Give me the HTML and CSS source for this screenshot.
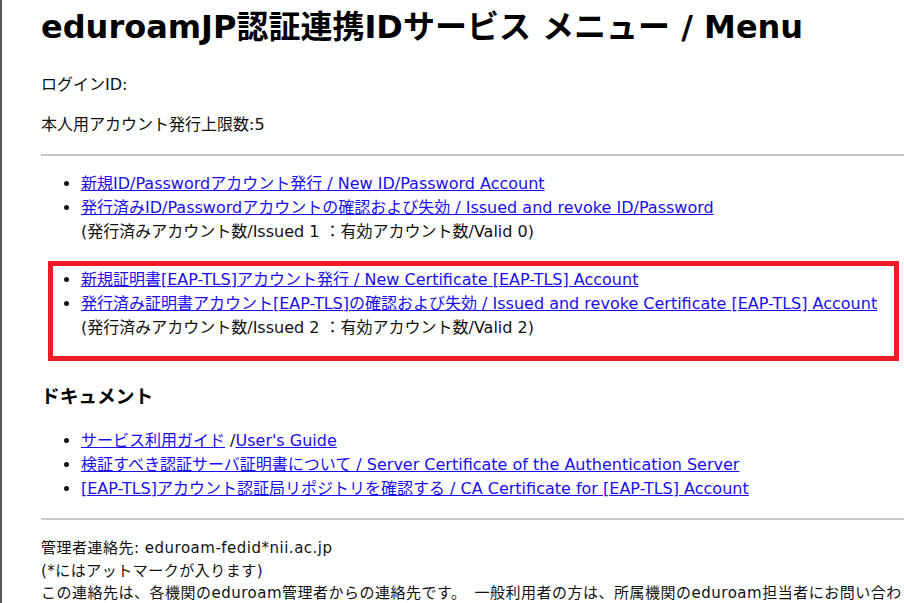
FILE: index.html
```html
<!DOCTYPE html>
<html lang="ja">
<head>
<meta charset="utf-8">
<title>eduroamJP認証連携IDサービス メニュー / Menu</title>
<link rel="stylesheet" href="styles.css">
</head>
<body>
<div class="page">
  <h1 class="title">eduroamJP認証連携IDサービス メニュー / Menu</h1>
  <p class="info">ログインID:</p>
  <p class="info">本人用アカウント発行上限数:5</p>
  <hr class="rule rule-top">
  <ul class="menu menu-first">
    <li><a href="#">新規ID/Passwordアカウント発行 / New ID/Password Account</a></li>
    <li><a href="#">発行済みID/Passwordアカウントの確認および失効 / Issued and revoke ID/Password</a><br>(発行済みアカウント数/Issued 1 ：有効アカウント数/Valid 0)</li>
  </ul>
  <div class="highlight">
    <ul class="menu menu-boxed">
      <li><a href="#">新規証明書[EAP-TLS]アカウント発行 / New Certificate [EAP-TLS] Account</a></li>
      <li><a href="#">発行済み証明書アカウント[EAP-TLS]の確認および失効 / Issued and revoke Certificate [EAP-TLS] Account</a><br>(発行済みアカウント数/Issued 2 ：有効アカウント数/Valid 2)</li>
    </ul>
  </div>
  <h3 class="section">ドキュメント</h3>
  <ul class="menu menu-docs">
    <li><a href="#">サービス利用ガイド</a> /<a href="#">User's Guide</a></li>
    <li><a href="#">検証すべき認証サーバ証明書について / Server Certificate of the Authentication Server</a></li>
    <li><a href="#">[EAP-TLS]アカウント認証局リポジトリを確認する / CA Certificate for [EAP-TLS] Account</a></li>
  </ul>
  <hr class="rule rule-bottom">
  <div class="footer">
    <div>管理者連絡先: eduroam-fedid*nii.ac.jp</div>
    <div>(*にはアットマークが入ります)</div>
    <div>この連絡先は、各機関のeduroam管理者からの連絡先です。　一般利用者の方は、所属機関のeduroam担当者にお問い合わせください。</div>
  </div>
</div>
</body>
</html>
```

FILE: styles.css
```css
html, body {
  margin: 0;
  padding: 0;
  background: #ffffff;
}
body {
  font-family: "DejaVu Sans", "Noto Sans CJK JP", sans-serif;
  font-size: 16px;
  line-height: 24px;
  color: #111111;
  overflow: hidden;
}
.page {
  min-height: 603px;
  border-left: 2px solid #555555;
  padding-left: 39px;
  box-sizing: border-box;
}
.title {
  font-size: 32px;
  line-height: 40px;
  font-weight: bold;
  margin: 0;
  padding-top: 7px;
  white-space: nowrap;
  color: #000000;
}
.info {
  margin: 0;
}
.title + .info {
  margin-top: 26px;
}
.info + .info {
  margin-top: 16px;
}
.rule {
  border: 0;
  border-top: 2px solid #c6c6c6;
  height: 0;
  margin: 0;
}
.rule-top {
  margin-top: 17px;
}
.menu {
  margin: 0;
  padding-left: 40px;
  list-style: disc;
}
.menu a {
  color: #1a0dee;
  text-decoration: underline;
}
.menu-first {
  margin-top: 16px;
}
.highlight {
  margin: 17px 5px 0 7px;
  border: 5px solid #ed1c24;
  padding: 2px 0 16px 0;
}
.menu-boxed {
  padding-left: 28px;
}
.section {
  font-size: 18.7px;
  line-height: 28px;
  font-weight: bold;
  margin: 22px 0 0 0;
  color: #000000;
}
.menu-docs {
  margin-top: 18px;
}
.rule-bottom {
  margin-top: 17px;
}
.footer {
  margin-top: 17px;
  font-size: 15px;
  line-height: 22.5px;
  letter-spacing: 0.5px;
}
```
